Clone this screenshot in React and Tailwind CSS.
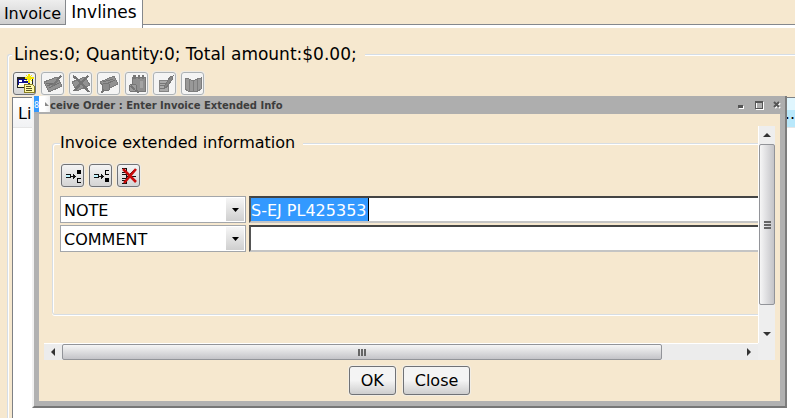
import React, { useState } from 'react';

// 20x20 toolbar drawings
const toolIcons = {
    create: (
        <>
            <path d="M2 3h15v10H2z" fill="#ffffc8" stroke="#222" />
            <path d="M2 3h11v2H2z" fill="#222" />
            <path d="M3 5h12v6H3z" fill="#10108c" />
            <path d="M4 6h3v2H4zM9 6h4v1H9zM4 9h9v2H4z" fill="#fff" />
            <path d="M14 0v9M10 4h9M11 1l6 6M17 1l-6 6" stroke="#f4e600" strokeWidth="1.4" />
            <path d="M9 10h8l2 2v6H9z" fill="#fff9a8" stroke="#8a7f20" />
            <path d="M11 12h5M11 14h6M11 16h6" stroke="#57521c" />
        </>
    ),
    edit: (
        <>
            <path d="M1 8l13-5 5 9-13 6z" fill="#929292" stroke="#7b7b7b" />
            <path d="M3 9l4 1 4-1M6 14l10-5M4 12l5-2" stroke="#6f6f6f" fill="none" />
            <path d="M9 11l8-10 2 1-7 9-3 2z" fill="#777" />
        </>
    ),
    remove: (
        <>
            <path d="M1 8l13-5 5 8-13 6z" fill="#929292" stroke="#7b7b7b" />
            <path d="M2 2c5 3 10 9 16 16M17 2C12 7 8 11 3 17" stroke="#747474" strokeWidth="2.4" fill="none" />
        </>
    ),
    search: (
        <>
            <path d="M1 8l14-6 4 8-12 6z" fill="#929292" stroke="#7b7b7b" />
            <path d="M4 8l10-3M7 10l9-4" stroke="#747474" />
            <circle cx="7" cy="13" r="4" fill="#8b8b8b" stroke="#747474" />
            <path d="M5 16l-3 3" stroke="#777" strokeWidth="2" />
        </>
    ),
    schedule: (
        <>
            <path d="M5 3h13v14H5z" fill="#8f8f8f" stroke="#777" />
            <path d="M6 1h3v4H6zM11 1h2v4h-2zM15 1h2v4h-2z" fill="#777" />
            <path d="M13 7h3v7h-3z" fill="#a4a4a4" />
            <circle cx="6" cy="14" r="4" fill="#9c9c9c" stroke="#757575" />
            <path d="M4 12l4 4M9 16l3 3" stroke="#757575" strokeWidth="1.6" />
        </>
    ),
    note: (
        <>
            <path d="M4 6h9v11H4z" fill="#aaa" stroke="#838383" />
            <path d="M5 9h6M5 11h6M5 14h5" stroke="#777" />
            <path d="M9 13l6-10 3-1-1 4-6 8z" fill="#858585" stroke="#777" />
        </>
    ),
    book: (
        <>
            <path d="M2 4l4 1 4 2 4-2 4-1v11l-3 2-5 1-5-1-3-2z" fill="#999" stroke="#7d7d7d" />
            <path d="M6 5v12M10 7v11M14 5v12" stroke="#7d7d7d" />
        </>
    ),
    insertBefore: (
        <>
            <path d="M3 8h4v4H3z" fill="#bff4ff" />
            <path d="M3 8h5v1H3zM3 11h5v1H3zM7 9h1v2H7zM7 10h6v1H7zM10 8h1v5h-1zM11 9h1v3h-1z" fill="#111" />
            <path d="M14 4h4v4h-4zM14 12h4v1h-4zM14 16h4v1h-4zM14 12h1v5h-1z" fill="#000" />
        </>
    ),
    insertAfter: (
        <>
            <path d="M3 8h4v4H3z" fill="#bff4ff" />
            <path d="M3 8h5v1H3zM3 11h5v1H3zM7 9h1v2H7zM7 10h6v1H7zM10 8h1v5h-1zM11 9h1v3h-1z" fill="#111" />
            <path d="M14 12h4v4h-4zM14 4h4v1h-4zM14 8h4v1h-4zM14 4h1v5h-1z" fill="#000" />
        </>
    ),
    deleteRow: (
        <>
            <path d="M3 2.5h4v4H3M3 8.5h4v4H3M3 14.5h4v3H3M7 10.5h10M15 4.5l-5 5 6 5" fill="none" stroke="#111" />
            <path d="M4 3l13 13M17 3L5 17" stroke="#c80b0b" strokeWidth="2.6" fill="none" shapeRendering="auto" />
        </>
    ),
};

const toolbar = [
    { id: 'create', name: 'Create line' },
    { id: 'edit', name: 'Edit line', disabled: true },
    { id: 'remove', name: 'Remove line', disabled: true },
    { id: 'search', name: 'Find line', disabled: true },
    { id: 'schedule', name: 'Schedule', disabled: true },
    { id: 'note', name: 'Notes', disabled: true },
    { id: 'book', name: 'Catalog', disabled: true },
];

const rowTools = [
    { id: 'insertBefore', name: 'Insert before' },
    { id: 'insertAfter', name: 'Insert after' },
    { id: 'deleteRow', name: 'Delete row' },
];

function ToolButton({ item }) {
    return (
        <button
            type="button"
            aria-label={item.name}
            disabled={item.disabled}
            className="flex size-[23px] items-center justify-center rounded-[3px] border border-[#707276] bg-linear-to-b from-[#f4f4f4] to-[#d4d4d4] ring-1 ring-[#eeebe5] disabled:border-[#adb2b5] disabled:bg-none disabled:bg-[#f4f4f4]"
        >
            <svg viewBox="0 0 20 20" className="size-5 shrink-0" fill="none" shapeRendering="crispEdges">
                {toolIcons[item.id]}
            </svg>
        </button>
    );
}

function TypeSelect({ label, value, onChange }) {
    return (
        <div className="relative w-[186px] shrink-0">
            <select
                aria-label={label}
                value={value}
                onChange={(e) => onChange(e.target.value)}
                className="block h-[27px] w-full appearance-none border border-[#a3a6aa] bg-white pt-0.5 pl-[3px] leading-6 outline-none"
            >
                <option>NOTE</option>
                <option>COMMENT</option>
            </select>
            <span className="pointer-events-none absolute inset-y-0.5 right-0.5 flex w-[18px] items-center justify-center bg-linear-to-b from-[#f6f6f6] to-[#cfcfcf]">
                <svg viewBox="0 0 7 4" className="h-1 w-[7px]">
                    <path d="M0 0h7L3.5 4z" />
                </svg>
            </span>
        </div>
    );
}

function Arrow({ className, d, label }) {
    return (
        <button type="button" aria-label={label} className={`flex shrink-0 items-center justify-center ${className}`}>
            <svg viewBox="0 0 8 8" className="size-2">
                <path d={d} fill="#333" />
            </svg>
        </button>
    );
}

function ExtendedInfoDialog() {
    const [rows, setRows] = useState([
        { type: 'NOTE', text: 'S-EJ PL425353' },
        { type: 'COMMENT', text: '' },
    ]);

    const updateRow = (index, changes) => {
        setRows(rows.map((row, i) => (i === index ? { ...row, ...changes } : row)));
    };

    return (
        <section
            role="dialog"
            aria-labelledby="dialog-title"
            className="absolute top-24 right-2 left-8 border-r-2 border-b-2 border-l-2 border-r-[#7d7d7d] border-b-[#777] border-l-[#f2f2f2] bg-[#b1b1b1]"
        >
            <header className="flex h-[18px] items-center bg-[#aeaeae]">
                <span className="flex h-4 w-[5px] items-end self-start bg-[#3399ff] text-[8px] leading-3 text-white">8</span>
                <span className="flex h-4 w-[11px] items-center self-start bg-linear-to-r from-white from-50% to-[#eee] pl-1.5">
                    <svg viewBox="0 0 4 4" className="size-1"><path d="M0 0l4 4H0z" fill="#888" /></svg>
                </span>
                <h2 id="dialog-title" className="flex-1 text-[10px] font-bold text-[#3d3d3d]">
                    ceive Order : Enter Invoice Extended Info
                </h2>
                <div className="flex gap-2 pr-[3px]">
                    <button type="button" aria-label="Minimize" className="size-[10px]">
                        <svg viewBox="0 0 10 10"><path d="M3 6h5v3H3z" fill="#fff" /><path d="M2 5h5v3H2z" fill="#555" /></svg>
                    </button>
                    <button type="button" aria-label="Maximize" className="size-[10px]">
                        <svg viewBox="0 0 10 10" fill="none" shapeRendering="crispEdges">
                            <path d="M2.5 2.5h7v7h-7z" stroke="#fff" />
                            <path d="M1.5 1.5h7v7h-7zM1 2.5h8" stroke="#555" />
                        </svg>
                    </button>
                    <button type="button" aria-label="Close window" className="size-[10px]">
                        <svg viewBox="0 0 10 10" fill="none">
                            <path d="M3 3l5 5M8 3L3 8" stroke="#fff" strokeWidth="2" />
                            <path d="M2 2l5 5M7 2L2 7" stroke="#555" strokeWidth="2" />
                        </svg>
                    </button>
                </div>
            </header>

            <div className="mr-[5px] mb-[5px] ml-[5px] bg-[#f6e8cf] px-[5px] pt-3 pb-1.5">
                <div className="grid grid-cols-[1fr_17px] grid-rows-[217px_17px]">
                    {/* Scrolled content */}
                    <div className="overflow-hidden pt-[5px] pl-2">
                        <fieldset className="-mr-2 h-[184px] min-w-0 rounded-[3px] border border-[#d7dde3] pl-[7px] shadow-[inset_1px_1px_0_#fff,0_1px_0_#fff]">
                            <legend className="bg-[#f6e8cf] pr-2 leading-6">Invoice extended information</legend>
                            <div className="flex gap-[5px] pt-[9px] pl-px">
                                {rowTools.map((item) => (
                                    <ToolButton key={item.id} item={item} />
                                ))}
                            </div>
                            <div className="space-y-0.5 pt-[9px]">
                                {rows.map((row, index) => (
                                    <div key={index} className="flex gap-[3px]">
                                        <TypeSelect
                                            label={`Type ${index + 1}`}
                                            value={row.type}
                                            onChange={(type) => updateRow(index, { type })}
                                        />
                                        <div className="flex h-[27px] flex-1 border-t-2 border-b-2 border-l-2 border-t-[#444] border-b-[#c4c4c4] border-l-[#555] bg-white">
                                            <input
                                                type="text"
                                                aria-label={`Value ${index + 1}`}
                                                value={row.text}
                                                onChange={(e) => updateRow(index, { text: e.target.value })}
                                                className={
                                                    row.text
                                                        ? 'field-sizing-content border-r border-black bg-[#3399ff] pt-0.5 pr-0.5 text-white outline-none'
                                                        : 'w-full outline-none'
                                                }
                                            />
                                        </div>
                                    </div>
                                ))}
                            </div>
                        </fieldset>
                    </div>

                    {/* Vertical scrollbar */}
                    <div className="flex flex-col border-l border-white bg-[#eee]">
                        <Arrow label="Scroll up" className="h-[18px]" d="M0 6l4-4 4 4z" />
                        <div className="flex h-[161px] items-center justify-center rounded-[2px] border border-[#929499] bg-linear-to-r from-[#f6f6f6] to-[#c4c4c8]">
                            <span className="flex flex-col gap-px">
                                <i className="h-0.5 w-[7px] bg-[#666]" />
                                <i className="h-0.5 w-[7px] bg-[#666]" />
                                <i className="h-0.5 w-[7px] bg-[#666]" />
                            </span>
                        </div>
                        <div className="flex-1" />
                        <Arrow label="Scroll down" className="h-[18px]" d="M0 2h8L4 6z" />
                    </div>

                    {/* Horizontal scrollbar */}
                    <div className="flex border-t border-white bg-[#ececec]">
                        <Arrow label="Scroll left" className="w-[18px]" d="M6 0v8L2 4z" />
                        <div className="flex w-[84%] items-center justify-center rounded-[2px] border border-[#929499] bg-linear-to-b from-[#f6f6f6] to-[#c4c4c8]">
                            <span className="flex gap-px">
                                <i className="h-[7px] w-0.5 bg-[#666]" />
                                <i className="h-[7px] w-0.5 bg-[#666]" />
                                <i className="h-[7px] w-0.5 bg-[#666]" />
                            </span>
                        </div>
                        <div className="flex-1" />
                        <Arrow label="Scroll right" className="w-[18px]" d="M2 0v8l4-4z" />
                    </div>
                    <div className="bg-[#eee]" />
                </div>

                <div className="flex justify-center gap-[7px] pt-1.5">
                    {['OK', 'Close'].map((name) => (
                        <button
                            key={name}
                            type="button"
                            className="h-[29px] rounded-[3px] border border-[#707276] bg-linear-to-b from-[#f4f4f4] from-50% to-[#cecece] px-[11px] ring-1 ring-[#f2ede4]"
                        >
                            {name}
                        </button>
                    ))}
                </div>
            </div>
        </section>
    );
}

export default function App() {
    return (
        <div className="relative flex min-h-screen flex-col overflow-hidden bg-[#f6e8cf] font-['DejaVu_Sans',sans-serif] text-[16px] text-black">
            <nav className="flex h-7 items-start border-b-3 border-white">
                <button type="button" className="h-[25px] w-[66px] border-r border-b border-[#85888c] bg-linear-to-b from-[#eee] to-[#cfcfcf] pt-0.5">
                    Invoice
                </button>
                <button type="button" className="h-7 w-[77px] shrink-0 border-r border-[#85888c] bg-white pb-1.5 text-[17px]">
                    Invlines
                </button>
                <div className="h-[25px] flex-1 border-b border-[#85888c]" />
            </nav>

            <main className="flex flex-1 flex-col pt-3.5 pl-[7px]">
                <fieldset className="min-w-0 flex-1 rounded-tl-[3px] border-t border-l border-[#d5dde6] pl-1 shadow-[inset_1px_1px_0_#fff]">
                    <legend className="bg-[#f6e8cf] pr-2 pl-0.5 text-[17px] leading-6">Lines:0; Quantity:0; Total amount:$0.00;</legend>
                    <div className="flex gap-[5px] pt-1.5 pl-px">
                        {toolbar.map((item) => (
                            <ToolButton key={item.id} item={item} />
                        ))}
                    </div>
                    <div className="mt-0.5 min-h-[321px] border-t border-l border-[#7e8185] bg-white">
                        <table className="w-full">
                            <thead>
                                <tr className="h-[29px] border-b border-[#e6e6e6]">
                                    <th scope="col" className="bg-linear-to-b from-white to-[#f1f2f4] pt-1 pl-[5px] text-left font-normal">Li</th>
                                    <th scope="col" className="w-10 bg-linear-to-b from-[#e0f6fe] from-40% to-[#b9e8fb] to-40% pt-1 text-right font-normal">...</th>
                                </tr>
                            </thead>
                        </table>
                    </div>
                </fieldset>
            </main>

            <ExtendedInfoDialog />
        </div>
    );
}
